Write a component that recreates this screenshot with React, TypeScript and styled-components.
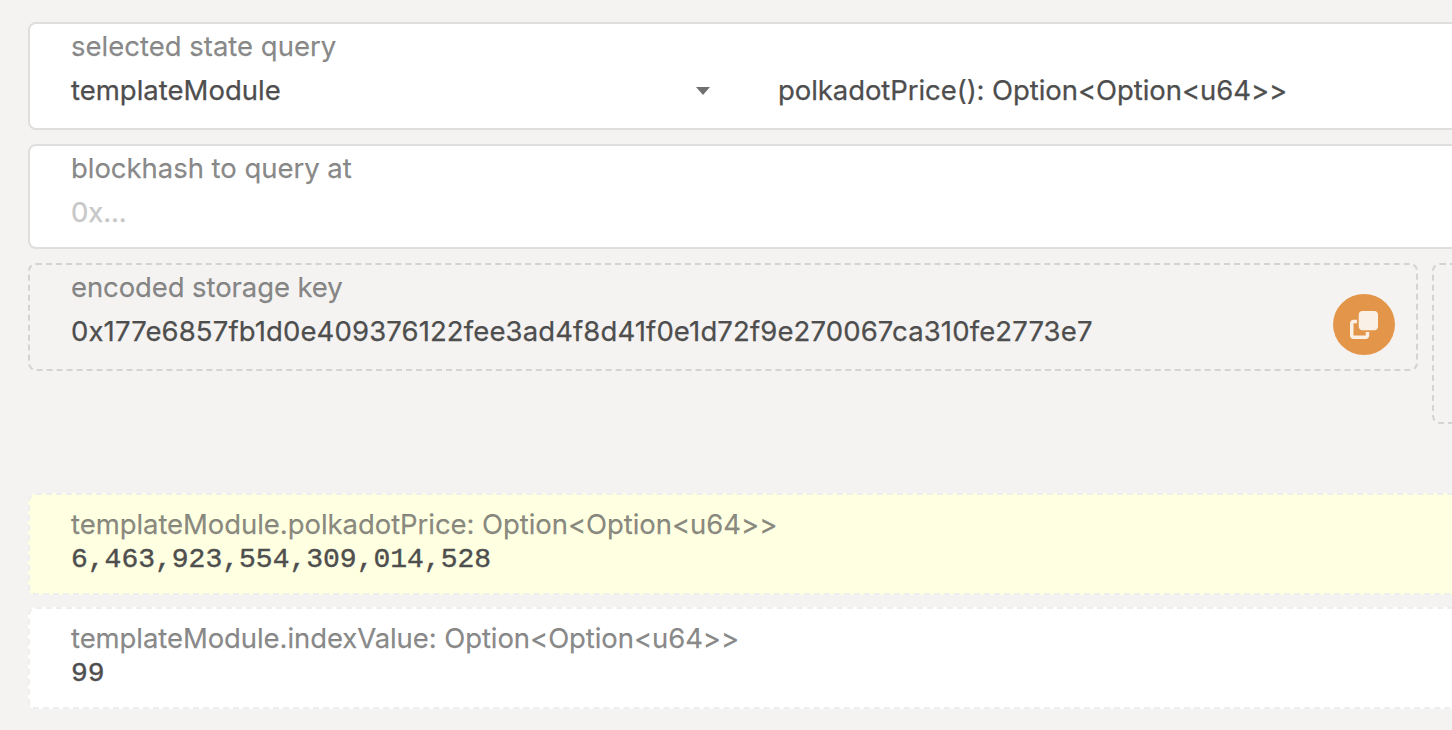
import React from 'react';
import styled, { createGlobalStyle } from 'styled-components';
import { FaClone } from 'react-icons/fa6';

const GlobalStyle = createGlobalStyle`
  *, *::before, *::after { box-sizing: border-box; }
  html, body { margin: 0; height: 100%; overflow: hidden; }
  body {
    background: #f4f3f1;
    color: #4e4e4e;
    font-family: Inter, Roboto, sans-serif;
    font-size: 27.5px;
    line-height: 34px;
    -webkit-text-stroke: 0.25px currentColor;
  }
`;

const Page = styled.main`
  display: flex;
  flex-direction: column;
  width: 1452px;
  height: 730px;
  padding: 22px 0 0 28px;
  overflow: hidden;
`;

const Field = styled.section<{ $height: number }>`
  flex: none;
  width: 1500px;
  height: ${(p) => p.$height}px;
  margin-bottom: 14px;
  padding: 5px 41px 0;
  border: 2px solid #dededf;
  border-radius: 8px;
  background: #fff;
`;

const Label = styled.div<{ $spacing?: number }>`
  color: rgba(78, 78, 78, 0.66);
  letter-spacing: ${(p) => p.$spacing ?? 0}px;
  white-space: nowrap;
`;

const Value = styled.div<{ $spacing?: number; $muted?: boolean }>`
  color: ${(p) => (p.$muted ? '#c7c7c7' : '#4e4e4e')};
  letter-spacing: ${(p) => p.$spacing ?? 0}px;
  white-space: nowrap;
`;

const ValueRow = styled.div`
  display: flex;
  align-items: center;
  margin-top: 10px;
`;

const Module = styled.div`
  display: flex;
  align-items: center;
  justify-content: space-between;
  width: 639px;
  margin-right: 68px;
`;

const Caret = styled.span`
  width: 0;
  height: 0;
  margin-top: 2px;
  border: 7.5px solid transparent;
  border-top: 8px solid #707070;
  border-bottom: 0;
`;

const KeyRow = styled.div`
  display: flex;
  align-items: flex-start;
  gap: 14px;
  flex: none;
  height: 230px;
  width: 1700px;
`;

const Dashed = styled.section<{ $width: number; $height: number }>`
  display: flex;
  justify-content: space-between;
  flex: none;
  width: ${(p) => p.$width}px;
  height: ${(p) => p.$height}px;
  padding: 5px 21px 0 41px;
  border: 2px dashed #d4d3d2;
  border-radius: 8px;
`;

const CopyButton = styled.button`
  display: flex;
  align-items: center;
  justify-content: center;
  width: 62px;
  height: 61px;
  margin-top: 24px;
  padding: 0;
  border: 0;
  border-radius: 50%;
  background: #e3964a;
  color: #fbf0e6;
  font-size: 28px;
`;

const Result = styled.section<{ $fresh?: boolean }>`
  flex: none;
  width: 1500px;
  height: 102px;
  margin-bottom: 12px;
  padding: 12px 41px 0;
  border: 2px dashed #eeeeee;
  border-radius: 8px;
  background: ${(p) => (p.$fresh ? '#ffffe1' : '#fff')};
`;

const Output = styled.div`
  margin-top: 3px;
  font-family: 'Liberation Mono', monospace;
  font-size: 28px;
  line-height: 32px;
  -webkit-text-stroke: 0.4px #4e4e4e;
`;

export default function App() {
  return (
    <>
      <GlobalStyle />
      <Page>
        <Field $height={108}>
          <Label>selected state query</Label>
          <ValueRow>
            <Module>
              <Value>templateModule</Value>
              <Caret />
            </Module>
            <Value $spacing={-0.07}>polkadotPrice(): Option&lt;Option&lt;u64&gt;&gt;</Value>
          </ValueRow>
        </Field>
        <Field $height={105}>
          <Label $spacing={-0.04}>blockhash to query at</Label>
          <ValueRow>
            <Value $muted $spacing={-0.1}>0x...</Value>
          </ValueRow>
        </Field>
        <KeyRow>
          <Dashed $width={1390} $height={108}>
            <div>
              <Label $spacing={-0.1}>encoded storage key</Label>
              <ValueRow>
                <Value $spacing={0.12}>0x177e6857fb1d0e409376122fee3ad4f8d41f0e1d72f9e270067ca310fe2773e7</Value>
              </ValueRow>
            </div>
            <CopyButton aria-label="copy">
              <FaClone />
            </CopyButton>
          </Dashed>
          <Dashed $width={200} $height={161} />
        </KeyRow>
        <Result $fresh>
          <Label $spacing={-0.06}>templateModule.polkadotPrice: Option&lt;Option&lt;u64&gt;&gt;</Label>
          <Output>6,463,923,554,309,014,528</Output>
        </Result>
        <Result>
          <Label $spacing={-0.08}>templateModule.indexValue: Option&lt;Option&lt;u64&gt;&gt;</Label>
          <Output>99</Output>
        </Result>
      </Page>
    </>
  );
}
